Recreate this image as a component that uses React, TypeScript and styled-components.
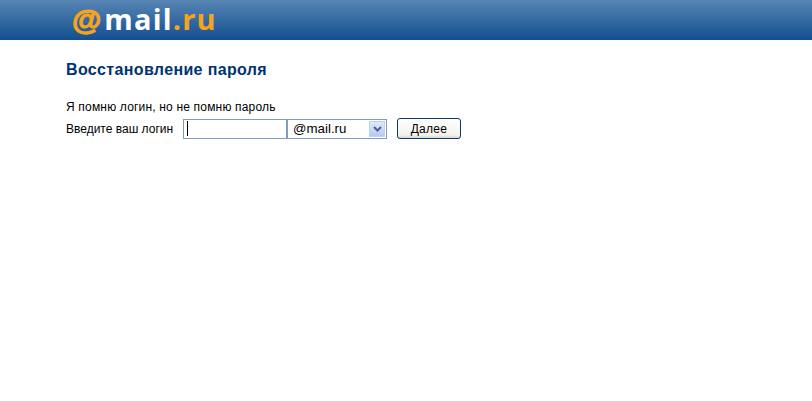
import styled, { createGlobalStyle } from "styled-components";

const GlobalStyle = createGlobalStyle`
  html, body {
    margin: 0;
    padding: 0;
    background: #ffffff;
  }
`;

const App = () => {
  return (
    <>
      <GlobalStyle />
      <Header>
        <Logo>
          <At>@</At>
          <White>mail</White>
          <Orange>.ru</Orange>
        </Logo>
      </Header>
      <Content>
        <Title>Восстановление пароля</Title>
        <Hint>Я помню логин, но не помню пароль</Hint>
        <FormRow>
          <Label>Введите ваш логин</Label>
          <LoginField>
            <Caret />
          </LoginField>
          <DomainSelect>
            <DomainText>@mail.ru</DomainText>
            <SelectArrow>
              <svg width="9" height="6" viewBox="0 0 9 6">
                <path d="M1 1l3.5 3.5L8 1" fill="none" stroke="#4d6185" strokeWidth="2" />
              </svg>
            </SelectArrow>
          </DomainSelect>
          <NextButton type="button">Далее</NextButton>
        </FormRow>
      </Content>
    </>
  );
};

export default App;

const Header = styled.div`
  height: 40px;
  padding: 0 0 2px 72px;
  box-sizing: border-box;
  background: linear-gradient(#5785b4, #134f90);
  display: flex;
  align-items: center;
`;

const Logo = styled.div`
  display: flex;
  align-items: baseline;
  font-family: "Open Sans", sans-serif;
  font-size: 29px;
  font-weight: 700;
  line-height: 36px;
  letter-spacing: 1.2px;
  white-space: nowrap;
`;

const Orange = styled.span`
  color: #f7a31c;
`;

const At = styled(Orange)`
  font-family: "Liberation Sans", Arial, sans-serif;
  font-size: 30px;
  letter-spacing: 3px;
  -webkit-text-stroke: 1.2px #f7a31c;
`;

const White = styled.span`
  color: #ffffff;
`;

const Content = styled.div`
  padding: 21px 0 0 66px;
  font-family: "Liberation Sans", Arial, sans-serif;
`;

const Title = styled.h1`
  margin: 0;
  font-size: 16px;
  line-height: 18px;
  font-weight: 700;
  letter-spacing: 0.35px;
  color: #003471;
`;

const Hint = styled.div`
  margin-top: 21px;
  font-size: 12px;
  line-height: 14px;
  letter-spacing: 0.18px;
  color: #000000;
`;

const FormRow = styled.div`
  display: flex;
  align-items: center;
  margin-top: 4px;
  height: 21px;
`;

const Label = styled.span`
  width: 117px;
  font-size: 12px;
  color: #000000;
`;

const LoginField = styled.div`
  width: 104px;
  height: 20px;
  box-sizing: border-box;
  border: 1px solid #7f9db9;
  display: flex;
  align-items: center;
  padding-left: 3px;
  background: #ffffff;
`;

const Caret = styled.div`
  width: 1px;
  height: 15px;
  background: #000000;
`;

const DomainSelect = styled.div`
  width: 100px;
  height: 20px;
  box-sizing: border-box;
  border: 1px solid #7f9db9;
  display: flex;
  align-items: center;
  justify-content: space-between;
  padding: 0 1px 0 5px;
  background: #ffffff;
`;

const DomainText = styled.span`
  font-size: 13.3px;
  color: #000000;
`;

const SelectArrow = styled.div`
  width: 16px;
  height: 16px;
  box-sizing: border-box;
  border: 1px solid #bdd0f2;
  background: linear-gradient(#dfe8fb, #b7caf5);
  display: flex;
  align-items: center;
  justify-content: center;
`;

const NextButton = styled.button`
  width: 64px;
  height: 21px;
  margin-left: 10px;
  padding: 0;
  box-sizing: border-box;
  border: 1px solid #0a3a6e;
  border-radius: 3px;
  background: linear-gradient(#ffffff, #f3f2ea 85%, #dcd8ca);
  font-family: "Liberation Sans", Arial, sans-serif;
  font-size: 12px;
  letter-spacing: 0.3px;
  color: #000000;
`;
